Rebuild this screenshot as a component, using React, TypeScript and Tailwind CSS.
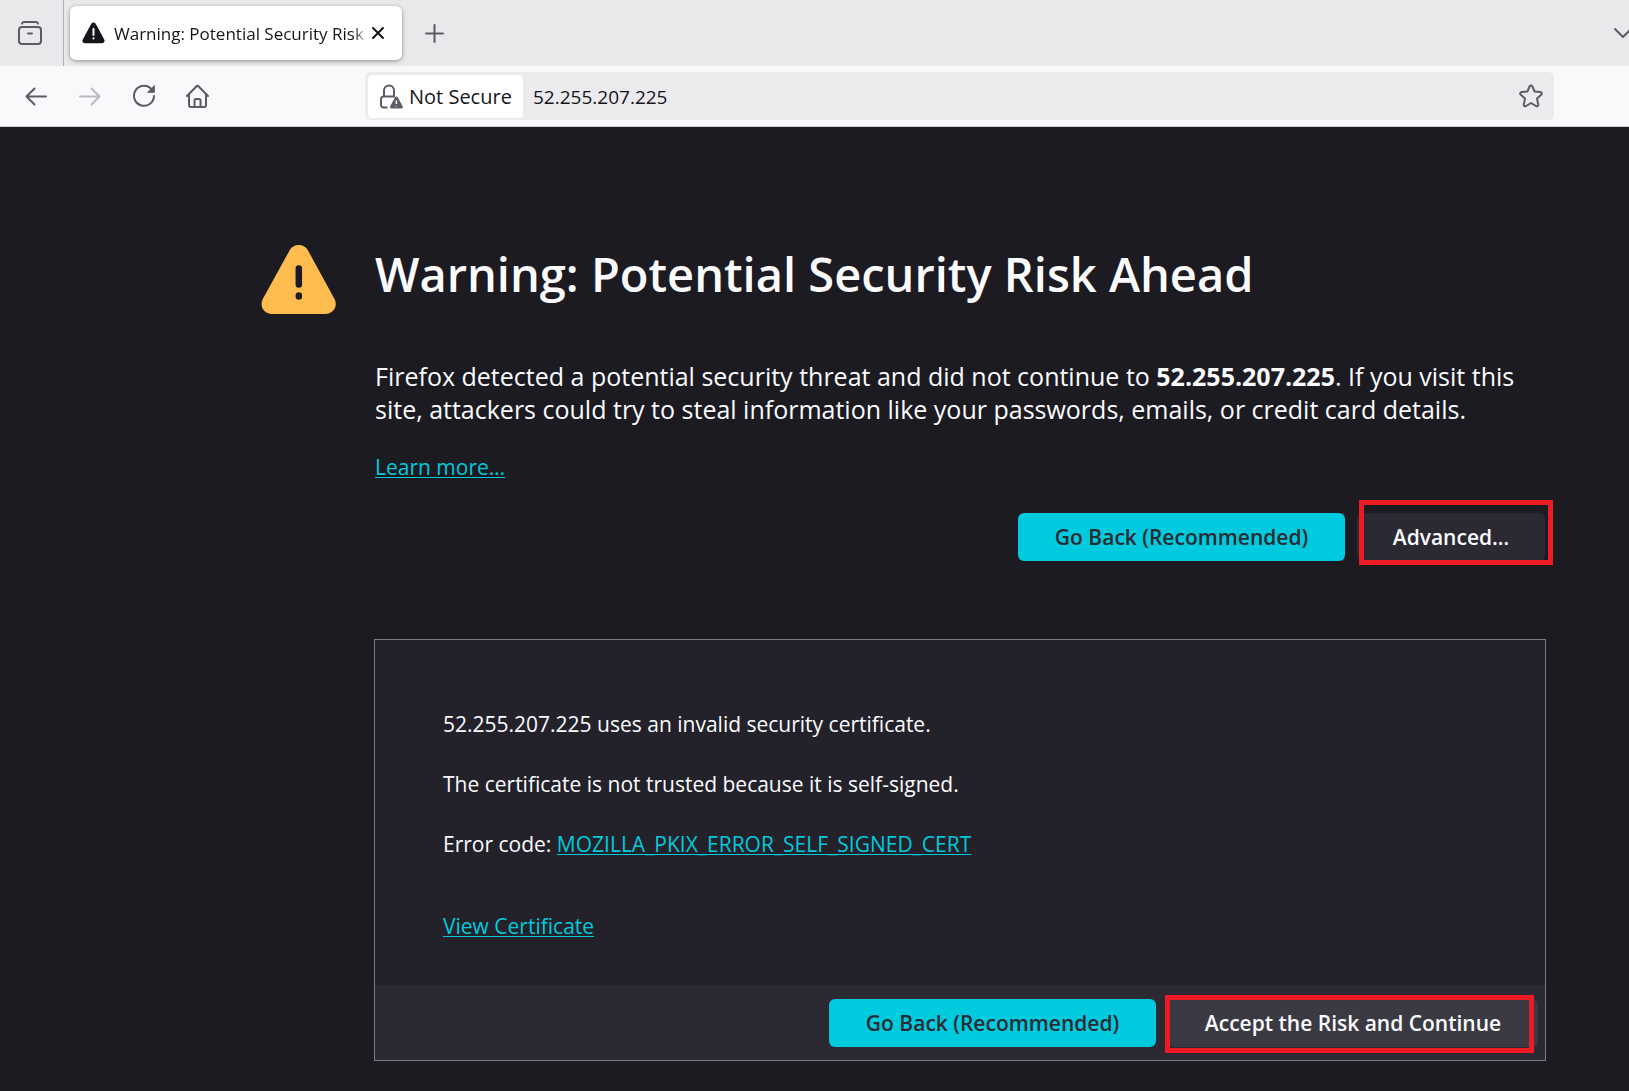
import type { ReactNode } from "react";

const host = "52.255.207.225";

const fontStack = "font-['Open_Sans','Noto_Sans',sans-serif]";
const linkStyle = "text-[#00cadb] underline decoration-1 underline-offset-2";

type IconProps = {
  size?: number;
  children: ReactNode;
};

function Icon({ size = 24, children }: IconProps) {
  return (
    <svg
      width={size}
      height={size}
      viewBox="0 0 24 24"
      fill="none"
      stroke="currentColor"
      strokeWidth={2}
      strokeLinecap="round"
      strokeLinejoin="round"
      aria-hidden="true"
      className="shrink-0"
    >
      {children}
    </svg>
  );
}

function TabStrip() {
  return (
    <div className="flex h-[66px] items-center overflow-hidden bg-[#e9e9eb] text-[#5b5b66]">
      <div className="flex h-full w-16 shrink-0 items-center border-r border-[#aeaeb3] pl-[18px]">
        <button type="button" aria-label="Recent browsing">
          <Icon>
            <path d="M4 2.500C4.500 1.300 5 1 6 1h12c1 0 1.500.300 2 1.500" />
            <rect x="1" y="6" width="22" height="17" rx="3" />
            <path d="M10 12.500h4" />
          </Icon>
        </button>
      </div>
      <div className="ml-1.5 flex h-[54px] w-[332px] shrink-0 items-center rounded-md bg-white pr-[17px] pl-3 text-[#15141a] shadow-[0_1px_4px_rgba(0,0,0,0.4)]">
        <svg width="23" height="22" viewBox="0 0 23 22" aria-hidden="true" className="shrink-0">
          <path
            d="M9.300 1.700a2.500 2.500 0 0 1 4.400 0l8.500 15.800a2.500 2.500 0 0 1-2.200 3.700H3a2.500 2.500 0 0 1-2.200-3.700z"
            fill="currentColor"
          />
          <path d="M11.500 7v6M11.500 16.200v.2" stroke="#fff" strokeWidth="2" strokeLinecap="round" />
        </svg>
        <span className="ml-[9px] flex-1 mask-r-from-95% mask-r-to-100% pt-0.5 text-[17px] whitespace-nowrap">
          Warning: Potential Security Risk
        </span>
        <button type="button" aria-label="Close tab" className="ml-1">
          <svg width="14" height="14" viewBox="0 0 14 14" aria-hidden="true">
            <path d="M2 2l10 10M12 2L2 12" stroke="currentColor" strokeWidth="2" strokeLinecap="round" />
          </svg>
        </button>
      </div>
      <button type="button" aria-label="New tab" className="ml-[23px] pt-px">
        <svg width="19" height="19" viewBox="0 0 19 19" aria-hidden="true">
          <path d="M9.500 1v17M1 9.500h17" stroke="currentColor" strokeWidth="2" strokeLinecap="round" />
        </svg>
      </button>
      <button type="button" aria-label="List all tabs" className="-mr-1 ml-auto shrink-0">
        <svg width="20" height="12" viewBox="0 0 20 12" fill="none" aria-hidden="true">
          <path d="M2 2l8 8 8-8" stroke="currentColor" strokeWidth="2" strokeLinecap="round" strokeLinejoin="round" />
        </svg>
      </button>
    </div>
  );
}

function Toolbar() {
  return (
    <div className="flex h-[61px] items-center border-b border-[#cfcfd4] bg-[#f9f9fb] pr-[75px] pl-6 text-[#5b5b66]">
      <div className="flex w-[341px] shrink-0 items-center gap-[30px]">
        <button type="button" aria-label="Back">
          <Icon>
            <path d="M22 12.500H3M10.500 4.500l-8 8 8 8" />
          </Icon>
        </button>
        <button type="button" aria-label="Forward" disabled className="opacity-40">
          <Icon>
            <path d="M2 12.500h19M13.500 4.500l8 8-8 8" />
          </Icon>
        </button>
        <button type="button" aria-label="Reload">
          <Icon>
            <path d="M20 5.800A10 10 0 1 0 22 12" />
            <path d="M22.300 2v6.300H16z" fill="currentColor" strokeWidth="1" />
          </Icon>
        </button>
        <button type="button" aria-label="Home">
          <Icon>
            <path d="M1 12L10.300 2.500a1.700 1.700 0 0 1 2.400 0L22 12" />
            <path d="M3 10.500V21a2 2 0 0 0 2 2h13a2 2 0 0 0 2-2V10.500" />
            <path d="M8.500 22.500v-6A1.500 1.500 0 0 1 10 15h3a1.500 1.500 0 0 1 1.500 1.500v6" />
          </Icon>
        </button>
      </div>
      <div className="flex h-12 min-w-0 flex-1 items-center rounded-md bg-[#ebebed] pr-[11px] pl-[3px]">
        <button
          type="button"
          className="flex h-[43px] w-[155px] shrink-0 items-center rounded bg-white pl-3 text-xl text-[#15141a]"
        >
          <svg width="23" height="25" viewBox="0 0 23 25" fill="none" aria-hidden="true" className="shrink-0 text-[#5b5b66]">
            <path
              d="M7.500 23.500h-4A2.500 2.500 0 0 1 1 21v-6a2.500 2.500 0 0 1 2.500-2.500h11.500M4 12V6.500a5 5 0 0 1 10 0V12"
              stroke="currentColor"
              strokeWidth="2"
            />
            <path
              d="M15 13.300a1.600 1.600 0 0 1 2.800 0l4.800 8.900a1.500 1.500 0 0 1-1.300 2.300h-9.800a1.500 1.500 0 0 1-1.300-2.300z"
              fill="currentColor"
            />
            <path d="M16.400 16.500v3.500M16.400 22v.5" stroke="#fff" strokeWidth="1.500" />
          </svg>
          <span className="ml-1.5 pt-0.5 whitespace-nowrap">Not Secure</span>
        </button>
        <input
          type="text"
          aria-label="Address"
          defaultValue={host}
          className="ml-2.5 min-w-0 flex-1 bg-transparent pt-0.5 text-[19px] text-[#15141a] outline-none"
        />
        <button type="button" aria-label="Bookmark this page">
          <Icon>
            <path d="M10.600 2.300a1.600 1.600 0 0 1 2.800 0l2.200 5.200 5.700.6a1.500 1.500 0 0 1 .9 2.700l-4.200 3.800 1.200 5.700a1.500 1.500 0 0 1-2.300 1.700L12 19l-4.900 3a1.500 1.500 0 0 1-2.300-1.700L6 14.600l-4.200-3.800a1.500 1.500 0 0 1 .9-2.700l5.700-.6z" />
          </Icon>
        </button>
      </div>
    </div>
  );
}

function GoBackButton() {
  return (
    <button
      type="button"
      className="h-12 w-[327px] rounded-md bg-[#00cadd] pt-0.5 text-[21px] font-semibold whitespace-nowrap text-[#2b2a33]"
    >
      Go Back (Recommended)
    </button>
  );
}

function CertificatePanel() {
  return (
    <section className="mt-[78px] border border-[#7b7b82] bg-[#23222b]">
      <div className="flex flex-col items-start px-[68px] pt-[69px] pb-11 text-[21px] leading-[30px]">
        <p>{host} uses an invalid security certificate.</p>
        <p className="mt-[30px]">The certificate is not trusted because it is self-signed.</p>
        <p className="mt-[30px]">
          Error code:{" "}
          <a href="#error-code" className={linkStyle}>
            MOZILLA_PKIX_ERROR_SELF_SIGNED_CERT
          </a>
        </p>
        <a href="#certificate" className={`mt-[52px] ${linkStyle}`}>
          View Certificate
        </a>
      </div>
      <div className="flex justify-end gap-3 bg-[#2b2a33] pt-3.5 pr-[7px] pb-[13px]">
        <GoBackButton />
        <div className="relative">
          <button
            type="button"
            className="h-12 w-[370px] rounded-md bg-[#3a3a43] pt-0.5 text-[21px] font-semibold whitespace-nowrap"
          >
            Accept the Risk and Continue
          </button>
          <div className="pointer-events-none absolute -top-1 right-1 -bottom-1.5 -left-[3px] border-[5px] border-[#ed1c24]" />
        </div>
      </div>
    </section>
  );
}

export default function App() {
  return (
    <div className={`flex min-h-screen flex-col bg-[#1c1b22] text-[#fbfbfe] ${fontStack}`}>
      <header>
        <TabStrip />
        <Toolbar />
      </header>
      <main className="flex items-start pt-[114px] pr-[83px] pb-7 pl-[261px]">
        <svg width="76" height="76" viewBox="0 0 76 76" aria-hidden="true" className="shrink-0">
          <path
            d="M28.500 9.500a10.500 10.500 0 0 1 18.500 0l26.500 48.500a10 10 0 0 1-8.700 14.900H10.500a10 10 0 0 1-8.700-14.900z"
            fill="#ffbd4f"
          />
          <path d="M37.800 27.500v16M37.800 54.500v1" stroke="#1c1b22" strokeWidth="6.500" strokeLinecap="round" />
        </svg>
        <div className="ml-[37px] min-w-0 flex-1">
          <div className="pl-px">
            <h1 className="text-[47px] leading-[66px] font-semibold">Warning: Potential Security Risk Ahead</h1>
            <p className="mt-[53px] text-[25px] leading-[33px]">
              Firefox detected a potential security threat and did not continue to <b>{host}</b>. If you visit this
              site, attackers could try to steal information like your passwords, emails, or credit card details.
            </p>
            <p className="mt-[26px] text-[21px] leading-[30px]">
              <a href="#learn-more" className={linkStyle}>
                Learn more…
              </a>
            </p>
          </div>
          <div className="mt-[31px] flex justify-end gap-3 pr-px">
            <GoBackButton />
            <div className="relative">
              <button
                type="button"
                className="h-12 w-[188px] rounded-md bg-[#2b2a33] pt-0.5 text-[21px] font-semibold whitespace-nowrap"
              >
                Advanced…
              </button>
              <div className="pointer-events-none absolute -top-[13px] -right-2 -bottom-1 left-0.5 border-[5px] border-[#ed1c24]" />
            </div>
          </div>
          <CertificatePanel />
        </div>
      </main>
    </div>
  );
}
